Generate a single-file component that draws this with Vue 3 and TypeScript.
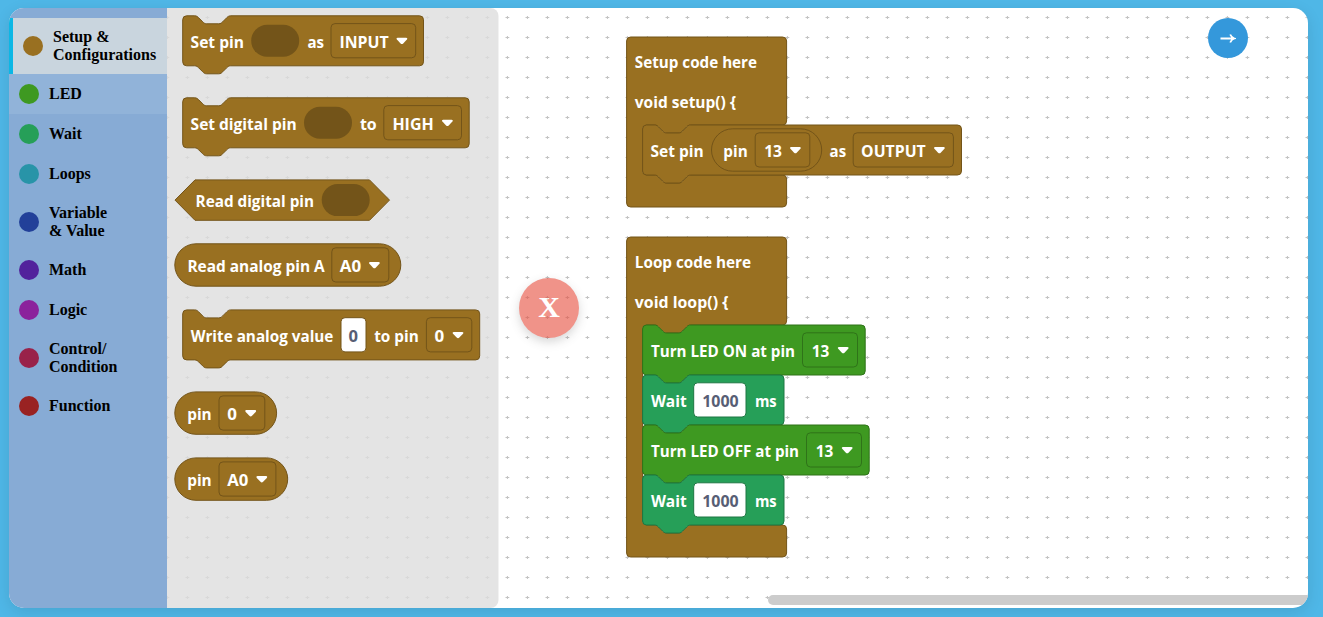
<script setup lang="ts">
interface Category { label: string[]; color: string; state?: string }
interface Tone { fill: string; edge: string }
interface Part {
  kind: 'text' | 'menu' | 'value' | 'slot' | 'pill'
  x: number
  w: number
  text?: string
  tx?: number
  tw?: number
  arrow?: number
}
interface Block {
  shape: 'stack' | 'hex' | 'round' | 'wrap'
  x: number
  y: number
  w: number
  inner?: number
  tone: Tone
  titles?: { text: string; w: number; dy: number }[]
  parts: Part[]
}

const categories: Category[] = [
  { label: ['Setup &', 'Configurations'], color: '#997021', state: 'selected' },
  { label: ['LED'], color: '#3e9921', state: 'hovered' },
  { label: ['Wait'], color: '#269f58' },
  { label: ['Loops'], color: '#2894a8' },
  { label: ['Variable', '& Value'], color: '#224099' },
  { label: ['Math'], color: '#52229c' },
  { label: ['Logic'], color: '#8b229c' },
  { label: ['Control/', 'Condition'], color: '#99224a' },
  { label: ['Function'], color: '#992222' },
]

const brown: Tone = { fill: '#997021', edge: '#735419' }
const green: Tone = { fill: '#3e9921', edge: '#2f7319' }
const teal: Tone = { fill: '#269f58', edge: '#1d7742' }

const text = (t: string, x: number, end: number): Part => ({ kind: 'text', text: t, x, w: end - x })
const menu = (t: string, x: number, end: number, tx: number, tEnd: number, arrow: number): Part =>
  ({ kind: 'menu', text: t, x, w: end - x, tx, tw: tEnd - tx, arrow })
const value = (t: string, x: number, end: number, tx: number, tEnd: number): Part =>
  ({ kind: 'value', text: t, x, w: end - x, tx, tw: tEnd - tx })
const slot = (x: number): Part => ({ kind: 'slot', x, w: 48 })

const flyout: Block[] = [
  { shape: 'stack', x: 182.7, y: 15.8, w: 240.8, tone: brown, parts: [
    text('Set pin', 190.7, 243.3), slot(251.2), text('as', 307.5, 323.3),
    menu('INPUT', 331, 415.7, 339.6, 388, 396.5)] },
  { shape: 'stack', x: 182.7, y: 97.8, w: 286.5, tone: brown, parts: [
    text('Set digital pin', 190.7, 296), slot(304), text('to', 360, 376),
    menu('HIGH', 383.8, 461.5, 392.6, 433, 442)] },
  { shape: 'hex', x: 175, y: 179.9, w: 214.5, tone: brown, parts: [
    text('Read digital pin', 195.7, 313.3), slot(321.7)] },
  { shape: 'round', x: 174.8, y: 243.8, w: 226, tone: brown, parts: [
    text('Read analog pin A', 187.5, 324), menu('A0', 331.8, 388.8, 340, 360.5, 369)] },
  { shape: 'stack', x: 182.7, y: 309.9, w: 297, tone: brown, parts: [
    text('Write analog value', 190.8, 332.7), value('0', 341, 366, 348.8, 357.4),
    text('to pin', 374.3, 418), menu('0', 426.4, 471.8, 434.6, 443.4, 452.6)] },
  { shape: 'round', x: 174.8, y: 391.9, w: 101.8, tone: brown, parts: [
    text('pin', 187.3, 211), menu('0', 219, 264.8, 227.4, 236.2, 245.3)] },
  { shape: 'round', x: 174.8, y: 457.9, w: 112.9, tone: brown, parts: [
    text('pin', 187.3, 211), menu('A0', 219, 275.9, 227.4, 247.6, 256.4)] },
]

const program: Block[] = [
  { shape: 'wrap', x: 626.6, y: 37, w: 160, inner: 50, tone: brown, parts: [], titles: [
    { text: 'Setup code here', w: 121.4, dy: 31 }, { text: 'void setup() {', w: 100.4, dy: 71 }] },
  { shape: 'stack', x: 642.6, y: 125, w: 318.9, tone: brown, parts: [
    text('Set pin', 650.7, 703), { kind: 'pill', x: 711.5, w: 110.2 }, text('pin', 723.4, 747),
    menu('13', 755.2, 809.8, 764.4, 781.3, 790), text('as', 829.7, 845.4),
    menu('OUTPUT', 853.2, 953.4, 861.3, 925, 934)] },
  { shape: 'wrap', x: 626.6, y: 237, w: 160, inner: 200, tone: brown, parts: [], titles: [
    { text: 'Loop code here', w: 115.4, dy: 31 }, { text: 'void loop() {', w: 92.8, dy: 71 }] },
  { shape: 'stack', x: 642.6, y: 325, w: 222.6, tone: green, parts: [
    text('Turn LED ON at pin', 651, 794.4), menu('13', 802.5, 857.5, 812, 828.7, 837.8)] },
  { shape: 'stack', x: 642.6, y: 375, w: 141.4, tone: teal, parts: [
    text('Wait', 651, 686), value('1000', 693.7, 746, 702.4, 737.9), text('ms', 755, 776)] },
  { shape: 'stack', x: 642.6, y: 425, w: 226.6, tone: green, parts: [
    text('Turn LED OFF at pin', 651, 798.4), menu('13', 806.5, 861.5, 816, 832.7, 841.8)] },
  { shape: 'stack', x: 642.6, y: 475, w: 141.4, tone: teal, parts: [
    text('Wait', 651, 686), value('1000', 693.7, 746, 702.4, 737.9), text('ms', 755, 776)] },
]

const notch = 'c2,0 3,1 4,2l4,4c1,1 2,2 4,2h12c2,0 3,-1 4,-2l4,-4c1,-1 2,-2 4,-2'
const tab = 'c-2,0 -3,1 -4,2l-4,4c-1,1 -2,2 -4,2h-12c-2,0 -3,-1 -4,-2l-4,-4c-1,-1 -2,-2 -4,-2'

function heightOf(b: Block): number {
  return b.shape === 'hex' ? 40.4 : b.shape === 'round' ? 42.4 : 50
}

function outline(b: Block): string {
  const { x, y, w } = b
  const h = heightOf(b)
  if (b.shape === 'hex') {
    return `M${x + 20},${y}H${x + w - 20}l20,${h / 2}l-20,${h / 2}H${x + 20}l-20,${-h / 2}z`
  }
  if (b.shape === 'round') {
    const r = h / 2
    return `M${x + r},${y}H${x + w - r}a${r},${r} 0 0 1 0,${h}H${x + r}a${r},${r} 0 0 1 0,${-h}z`
  }
  if (b.shape === 'wrap') {
    const n = b.inner ?? 50
    return `M${x},${y + 4}a4,4 0 0 1 4,-4H${x + w - 4}a4,4 0 0 1 4,4v80a4,4 0 0 1 -4,4H${x + 64}${tab}h-8a4,4 0 0 0 -4,4v${n - 8}a4,4 0 0 0 4,4h8${notch}H${x + w - 4}a4,4 0 0 1 4,4v24a4,4 0 0 1 -4,4H${x + 4}a4,4 0 0 1 -4,-4z`
  }
  return `M${x},${y + 4}a4,4 0 0 1 4,-4h8${notch}H${x + w - 4}a4,4 0 0 1 4,4v42a4,4 0 0 1 -4,4H${x + 48}${tab}h-8a4,4 0 0 1 -4,-4z`
}

const middle = (b: Block) => b.y + heightOf(b) / 2
const baseline = (b: Block) => Math.round(middle(b) + 7.2)
const arrowPath = (x: number, y: number) =>
  `M${x + 1.2},${y}h8.4c1.2,0 1.5,1 .8,1.8l-3.7,3.9c-.8,.8 -1.8,.8 -2.6,0l-3.7,-3.9c-.7,-.8 -.4,-1.8 .8,-1.8z`
</script>

<template>
  <main class="page">
    <div class="editor">
      <nav class="toolbox">
        <div v-for="c in categories" :key="c.color" class="category" :class="c.state">
          <span class="dot" :style="{ background: c.color }"></span>
          <span class="label"><span v-for="line in c.label" :key="line">{{ line }}</span></span>
        </div>
      </nav>
      <section class="workspace">
        <svg class="canvas" viewBox="167 8 1141 600" width="1141" height="600">
          <defs>
            <pattern id="grid" x="0" y="0" width="20" height="20" patternUnits="userSpaceOnUse">
              <path d="M5.500,17.500H9.300M7.400,16V19" stroke="#c2c2c2" stroke-width="1" />
            </pattern>
          </defs>
          <rect x="167" y="8" width="1141" height="600" fill="url(#grid)" />
          <path class="flyout" d="M167,8H490.5a8,8 0 0 1 8,8V600a8,8 0 0 1 -8,8H167z" />
          <g v-for="(b, i) in [...program, ...flyout]" :key="i">
            <path :d="outline(b)" :fill="b.tone.fill" :stroke="b.tone.edge" />
            <text
              v-for="t in b.titles" :key="t.text" class="word" :x="b.x + 8.2" :y="b.y + t.dy"
              :textLength="t.w + 0.8" lengthAdjust="spacingAndGlyphs"
            >{{ t.text }}</text>
            <template v-for="(p, j) in b.parts" :key="j">
              <rect v-if="p.kind === 'slot'" :x="p.x" :y="middle(b) - 16" :width="p.w" height="32" rx="16" :fill="b.tone.edge" />
              <rect v-else-if="p.kind === 'pill'" :x="p.x" :y="middle(b) - 21.2" :width="p.w" height="42.4" rx="21.2" fill="none" :stroke="b.tone.edge" />
              <text
                v-else-if="p.kind === 'text'" class="word" :x="p.x - 0.1" :y="baseline(b)"
                :textLength="p.w + 0.8" lengthAdjust="spacingAndGlyphs"
              >{{ p.text }}</text>
              <template v-else>
                <rect
                  :x="p.x" :y="middle(b) - 17.2" :width="p.w" height="34.2" rx="4"
                  :fill="p.kind === 'value' ? '#fff' : 'none'" :stroke="b.tone.edge"
                />
                <text
                  class="word" :class="{ typed: p.kind === 'value' }" :x="(p.tx ?? 0) - 0.2" :y="baseline(b)"
                  :textLength="(p.tw ?? 0) + 0.9" lengthAdjust="spacingAndGlyphs"
                >{{ p.text }}</text>
                <path v-if="p.arrow" :d="arrowPath(p.arrow, middle(b) - 3)" fill="#fff" />
              </template>
            </template>
          </g>
          <rect x="768" y="595" width="548" height="10" rx="5" fill="#ccc" />
        </svg>
        <button class="close">X</button>
        <button class="next">
          <svg width="16" height="12" viewBox="0 0 16 12" fill="none" stroke="#fff" stroke-width="1.8">
            <path d="M.5,6.500H14M10.200,2.500C11,4.500 12.300,5.900 14.400,6.500C12.300,7.100 11,8.500 10.200,10.500" />
          </svg>
        </button>
      </section>
    </div>
  </main>
</template>

<style>
body {
  background: #4fb7e7;
  overflow: hidden;
}
</style>

<style scoped>
.page {
  box-sizing: border-box;
  height: 617px;
  padding: 8px 15px 9px 9px;
  font-family: "Liberation Serif", "Times New Roman", serif;
}
.editor {
  display: flex;
  width: 1299px;
  height: 600px;
  overflow: hidden;
  border-radius: 15px;
  background: #fff;
  box-shadow: 0 4px 15px rgba(0, 0, 0, 0.1);
}
.toolbox {
  box-sizing: border-box;
  width: 158px;
  flex: none;
  padding-top: 10px;
  background: #87abd5;
}
.category {
  box-sizing: border-box;
  display: flex;
  align-items: center;
  gap: 10px;
  min-height: 40px;
  padding: 10px;
  color: #000;
  font-size: 16px;
  font-weight: 700;
  line-height: 18px;
}
.selected {
  border-left: 4px solid #0bb7e5;
  background: #c9d5de;
}
.hovered {
  background: #91b3d9;
}
.dot {
  width: 20px;
  height: 20px;
  flex: none;
  border-radius: 50%;
}
.label {
  display: flex;
  flex-direction: column;
  white-space: nowrap;
}
.workspace {
  position: relative;
  flex: 1;
}
.canvas {
  display: block;
}
.flyout {
  fill: #ddd;
  fill-opacity: 0.8;
}
.word {
  fill: #fff;
  font: 700 16px "Open Sans", "Noto Sans", sans-serif;
  white-space: pre;
}
.typed {
  fill: #575e75;
}
.close,
.next {
  position: absolute;
  display: flex;
  align-items: center;
  justify-content: center;
  padding: 0;
  border: 0;
  border-radius: 50%;
  color: #fff;
}
.close {
  top: 270px;
  left: 352px;
  width: 60px;
  height: 60px;
  padding-bottom: 2px;
  background: #e74c3c;
  box-shadow: 0 4px 10px rgba(0, 0, 0, 0.25);
  font: 700 30px "Liberation Serif", serif;
  opacity: 0.6;
}
.next {
  top: 10px;
  left: 1041px;
  width: 40px;
  height: 40px;
  background: #3498db;
}
</style>
